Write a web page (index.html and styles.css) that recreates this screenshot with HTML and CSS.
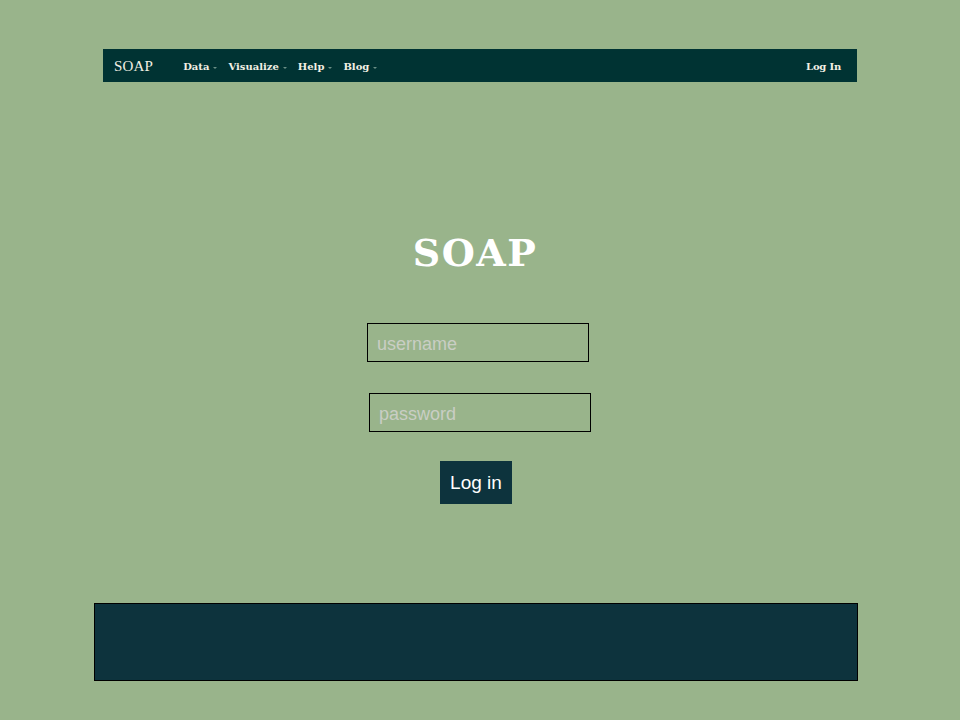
FILE: index.html
```html
<!DOCTYPE html>
<html>
<head>
<meta charset="utf-8">
<link rel="stylesheet" href="styles.css">
</head>
<body>
<nav class="navbar">
  <div class="nav-left">
    <span class="brand">SOAP</span>
    <ul class="menu">
      <li>Data <span class="caret"></span></li>
      <li>Visualize <span class="caret"></span></li>
      <li>Help <span class="caret"></span></li>
      <li>Blog <span class="caret"></span></li>
    </ul>
  </div>
  <span class="login-link">Log In</span>
</nav>
<main class="main">
  <h1 class="title">SOAP</h1>
  <input class="field" type="text" placeholder="username">
  <input class="field field-pass" type="password" placeholder="password">
  <button class="btn">Log in</button>
</main>
<footer class="footer"></footer>
</body>
</html>
```
FILE: styles.css
```css
html, body { margin: 0; padding: 0; }
body {
  background: #99b48b;
  width: 960px;
  height: 720px;
  overflow: hidden;
  font-family: "DejaVu Serif", "Liberation Serif", serif;
}
.navbar {
  margin: 49px 0 0 103px;
  width: 754px;
  height: 33px;
  background: #003333;
  display: flex;
  align-items: center;
  justify-content: space-between;
  box-sizing: border-box;
  padding: 2px 16px 0 11px;
  color: #f3f0e4;
}
.nav-left { display: flex; align-items: center; }
.brand { font-size: 15px; font-family: "Liberation Serif", serif; margin-right: 30px; letter-spacing: 0.2px; }
.menu { list-style: none; margin: 0; padding: 0; display: flex; gap: 11px; }
.menu li { font-size: 10px; font-weight: bold; font-family: "DejaVu Serif", serif; display: flex; align-items: center; }
.caret {
  display: inline-block;
  width: 0; height: 0;
  border-left: 2px solid transparent;
  border-right: 2px solid transparent;
  border-top: 2px solid #6a8f86;
  margin-left: 4px;
  margin-top: 2px;
}
.login-link { font-size: 10px; font-weight: bold; font-family: "DejaVu Serif", serif; letter-spacing: -0.2px; }
.main {
  display: flex;
  flex-direction: column;
  align-items: center;
}
.title {
  font-family: "DejaVu Serif", serif;
  font-weight: bold;
  font-size: 38px;
  letter-spacing: 1.5px;
  color: #ffffff;
  margin: 147px 0 0 -10px;
  line-height: 48px;
}
.field {
  width: 222px;
  height: 39px;
  box-sizing: border-box;
  border: 1px solid #000;
  background: transparent;
  font-family: "Liberation Sans", Arial, sans-serif;
  font-size: 18px;
  padding: 3px 9px 0;
  margin: 0 0 0 -4px;
  outline: none;
}
.field:first-of-type { margin-top: 46px; }
.field-pass { margin: 31px 0 0 0; }
.field::placeholder { color: #c9cec4; }
.btn {
  margin: 29px 0 0 -8px;
  width: 72px;
  height: 43px;
  background: #0d333d;
  color: #fff;
  border: none;
  font-family: "Liberation Sans", Arial, sans-serif;
  font-size: 19px;
  padding: 0;
}
.footer {
  margin: 99px 0 0 94px;
  width: 764px;
  height: 78px;
  box-sizing: border-box;
  background: #0d333d;
  border: 1px solid #000;
}
```
